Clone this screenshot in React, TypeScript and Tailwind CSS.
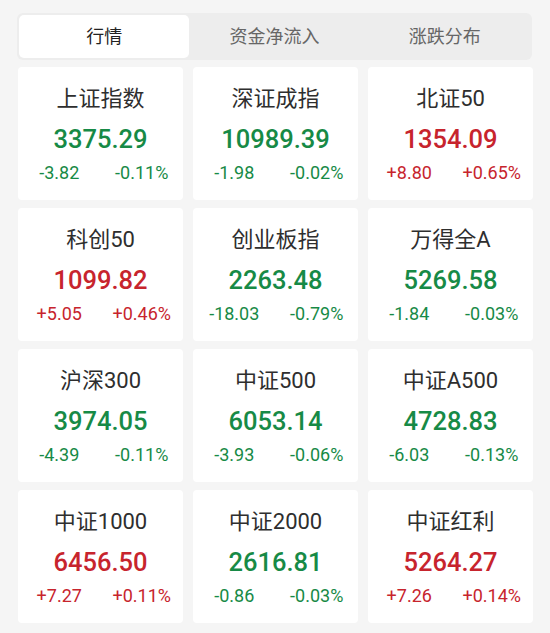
import React from "react";

type Item = { name: string; value: string; chg: string; pct: string; up: boolean };

const items: Item[] = [
  { name: "上证指数", value: "3375.29", chg: "-3.82", pct: "-0.11%", up: false },
  { name: "深证成指", value: "10989.39", chg: "-1.98", pct: "-0.02%", up: false },
  { name: "北证50", value: "1354.09", chg: "+8.80", pct: "+0.65%", up: true },
  { name: "科创50", value: "1099.82", chg: "+5.05", pct: "+0.46%", up: true },
  { name: "创业板指", value: "2263.48", chg: "-18.03", pct: "-0.79%", up: false },
  { name: "万得全A", value: "5269.58", chg: "-1.84", pct: "-0.03%", up: false },
  { name: "沪深300", value: "3974.05", chg: "-4.39", pct: "-0.11%", up: false },
  { name: "中证500", value: "6053.14", chg: "-3.93", pct: "-0.06%", up: false },
  { name: "中证A500", value: "4728.83", chg: "-6.03", pct: "-0.13%", up: false },
  { name: "中证1000", value: "6456.50", chg: "+7.27", pct: "+0.11%", up: true },
  { name: "中证2000", value: "2616.81", chg: "-0.86", pct: "-0.03%", up: false },
  { name: "中证红利", value: "5264.27", chg: "+7.26", pct: "+0.14%", up: true },
];

const font = { fontFamily: "Roboto, 'Noto Sans CJK SC', sans-serif" };

export default function App() {
  return (
    <div className="w-[550px] h-[633px] bg-[#f5f5f5] overflow-hidden" style={font}>
      <div className="pt-[13px] pl-[17px] pr-[18px]">
        <div className="h-[47px] rounded-[6px] bg-[#ededed] p-[2px] grid grid-cols-3">
          <div className="bg-white rounded-[5px] flex items-center justify-center text-[18px] text-[#222]">
            行情
          </div>
          <div className="flex items-center justify-center text-[18px] text-[#666]">资金净流入</div>
          <div className="flex items-center justify-center text-[18px] text-[#666]">涨跌分布</div>
        </div>
      </div>
      <div className="pl-[18px] pr-[17px] pt-[7px] grid grid-cols-3 gap-x-[10px] gap-y-[8px]">
        {items.map((it) => {
          const c = it.up ? "text-[#c7242d]" : "text-[#178a46]";
          return (
            <div key={it.name} className="h-[133px] bg-white rounded-[4px] flex flex-col items-center pt-[17px]">
              <div className="h-[30px] leading-[30px] text-[22px] text-[#2e2e2e]">{it.name}</div>
              <div className={`mt-[9px] h-[32px] leading-[32px] text-[25.5px] font-medium ${c}`}>{it.value}</div>
              <div className={`mt-[6px] w-full grid grid-cols-2 h-[24px] leading-[24px] text-[18px] ${c}`}>
                <div className="text-center">{it.chg}</div>
                <div className="text-center">{it.pct}</div>
              </div>
            </div>
          );
        })}
      </div>
    </div>
  );
}
